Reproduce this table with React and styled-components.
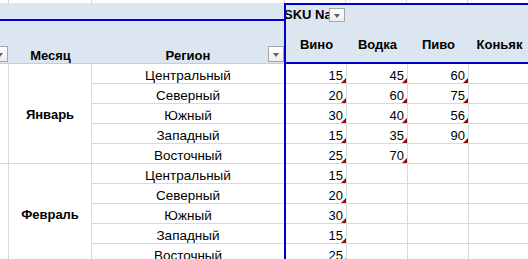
import React from "react";
import styled, { createGlobalStyle } from "styled-components";

const Global = createGlobalStyle`
  html, body { margin: 0; padding: 0; background: #fff; }
  * { box-sizing: border-box; }
`;

const GRID = "#d9d9d9";
const BLUE = "#0000cc";
const HEAD_BG = "#dce6f1";

const Page = styled.div`
  width: 528px;
  height: 259px;
  overflow: hidden;
  background: #fff;
  font-family: "Liberation Sans", Arial, sans-serif;
  color: #000;
  display: flex;
  flex-direction: column;
`;

const Strip = styled.div`
  display: flex;
  height: 3px;
  flex: none;
`;

const StripCell = styled.div`
  flex: none;
  width: ${(p) => p.$w}px;
  border-right: 1px solid ${GRID};
`;

const HeaderRow = styled.div`
  display: flex;
  height: 61px;
  flex: none;
`;

const LeftHead = styled.div`
  width: 284px;
  flex: none;
  background: ${HEAD_BG};
  border-bottom: 1px solid #c6cdd6;
  display: flex;
  flex-direction: column;
`;

const TopBand = styled.div`
  height: 18px;
  border-bottom: 2px solid ${BLUE};
  flex: none;
`;

const BottomBand = styled.div`
  flex: 1;
  display: flex;
  align-items: flex-end;
`;

const HeadCell = styled.div`
  position: relative;
  flex: none;
  width: ${(p) => p.$w}px;
  height: 100%;
  display: flex;
  align-items: flex-end;
  justify-content: ${(p) => (p.$end ? "flex-end" : "center")};
  overflow: hidden;
  font-weight: bold;
  font-size: 13px;
  line-height: 15px;
  padding-bottom: ${(p) => (p.$end ? 1 : 0)}px;
`;

const DropButton = styled.div`
  flex: none;
  width: 16px;
  height: ${(p) => p.$h || 16}px;
  border: 1px solid #a6a6a6;
  background: linear-gradient(#ffffff, #eeeeee);
  display: flex;
  align-items: center;
  justify-content: center;
  margin-right: ${(p) => p.$mr || 0}px;
  &::before {
    content: "";
    width: 0;
    height: 0;
    border-left: 3.5px solid transparent;
    border-right: 3.5px solid transparent;
    border-top: 4px solid #5f5f5f;
    margin-top: 1px;
  }
`;

const OverlayButton = styled(DropButton)`
  position: absolute;
  right: 0;
  bottom: 1px;
`;

const RightHead = styled.div`
  flex: none;
  width: 300px;
  height: 61px;
  background: ${HEAD_BG};
  border: 2px solid ${BLUE};
  border-right: none;
  display: flex;
  flex-direction: column;
`;

const SkuRow = styled.div`
  display: flex;
  height: 17px;
  align-items: flex-end;
  flex: none;
`;

const SkuCell = styled.div`
  width: 60px;
  display: flex;
  align-items: flex-end;
`;

const SkuLabel = styled.div`
  flex: 1;
  min-width: 0;
  overflow: hidden;
  white-space: nowrap;
  font-weight: bold;
  font-size: 13px;
  line-height: 15px;
  text-indent: -2px;
`;

const ProductRow = styled.div`
  display: flex;
  flex: 1;
  align-items: center;
  padding-top: 5px;
`;

const ProductCell = styled.div`
  flex: none;
  width: 61px;
  text-align: center;
  font-weight: bold;
  font-size: 13px;
  line-height: 15px;
`;

const Body = styled.div`
  display: flex;
  flex-direction: column;
`;

const Group = styled.div`
  display: flex;
  flex: none;
`;

const ColA = styled.div`
  width: 9px;
  flex: none;
  border-right: 1px solid ${GRID};
  border-bottom: 1px solid ${GRID};
`;

const MonthCell = styled.div`
  width: 83px;
  flex: none;
  border-right: 1px solid ${GRID};
  border-bottom: 1px solid ${GRID};
  display: flex;
  align-items: center;
  justify-content: center;
  font-weight: bold;
  font-size: 13px;
  line-height: 15px;
  padding-top: 1px;
`;

const RegionList = styled.div`
  width: 192px;
  flex: none;
  display: flex;
  flex-direction: column;
`;

const RegionCell = styled.div`
  height: 20px;
  border-bottom: 1px solid ${GRID};
  display: flex;
  align-items: flex-end;
  justify-content: center;
  font-size: 13.5px;
  line-height: 15px;
`;

const ValueArea = styled.div`
  flex: none;
  width: 300px;
  border-left: 2px solid ${BLUE};
  display: flex;
  flex-direction: column;
`;

const ValueRow = styled.div`
  display: flex;
  height: 20px;
`;

const ValueCell = styled.div`
  position: relative;
  flex: none;
  width: 61px;
  height: 20px;
  border-right: 1px solid ${GRID};
  border-bottom: 1px solid ${GRID};
  display: flex;
  align-items: flex-end;
  justify-content: flex-end;
  padding-right: 3px;
  font-size: 13px;
  line-height: 15px;
  &::after {
    content: "";
    display: ${(p) => (p.$flag ? "block" : "none")};
    position: absolute;
    right: 0;
    bottom: 0;
    width: 0;
    height: 0;
    border-left: 5px solid transparent;
    border-bottom: 5px solid #8b0a0a;
  }
`;

const regions = ["Центральный", "Северный", "Южный", "Западный", "Восточный"];

const data = [
  {
    month: "Январь",
    rows: [
      [15, 45, 60],
      [20, 60, 75],
      [30, 40, 56],
      [15, 35, 90],
      [25, 70, null],
    ],
  },
  {
    month: "Февраль",
    rows: [[15], [20], [30], [15], [25]],
  },
];

const products = ["Вино", "Водка", "Пиво", "Коньяк"];

export default function App() {
  return (
    <Page>
      <Global />
      <Strip>
        {[9, 83, 193, 61, 61, 61, 61].map((w, i) => (
          <StripCell key={i} $w={w} />
        ))}
      </Strip>
      <HeaderRow>
        <LeftHead>
          <TopBand />
          <BottomBand>
            <HeadCell $w={9} $end>
              <DropButton $mr={1} />
            </HeadCell>
            <HeadCell $w={83}>Месяц</HeadCell>
            <HeadCell $w={192}>
              Регион
              <OverlayButton />
            </HeadCell>
          </BottomBand>
        </LeftHead>
        <RightHead>
          <SkuRow>
            <SkuCell>
              <SkuLabel>SKU Name</SkuLabel>
              <DropButton $h={14} $mr={1} />
            </SkuCell>
          </SkuRow>
          <ProductRow>
            {products.map((p) => (
              <ProductCell key={p}>{p}</ProductCell>
            ))}
          </ProductRow>
        </RightHead>
      </HeaderRow>
      <Body>
        {data.map((g) => (
          <Group key={g.month}>
            <ColA />
            <MonthCell>{g.month}</MonthCell>
            <RegionList>
              {regions.map((r) => (
                <RegionCell key={r}>{r}</RegionCell>
              ))}
            </RegionList>
            <ValueArea>
              {g.rows.map((row, i) => (
                <ValueRow key={i}>
                  {[0, 1, 2, 3].map((c) => {
                    const v = row[c];
                    const has = v !== undefined && v !== null;
                    return (
                      <ValueCell key={c} $flag={has}>
                        {has ? v : ""}
                      </ValueCell>
                    );
                  })}
                </ValueRow>
              ))}
            </ValueArea>
          </Group>
        ))}
      </Body>
    </Page>
  );
}
